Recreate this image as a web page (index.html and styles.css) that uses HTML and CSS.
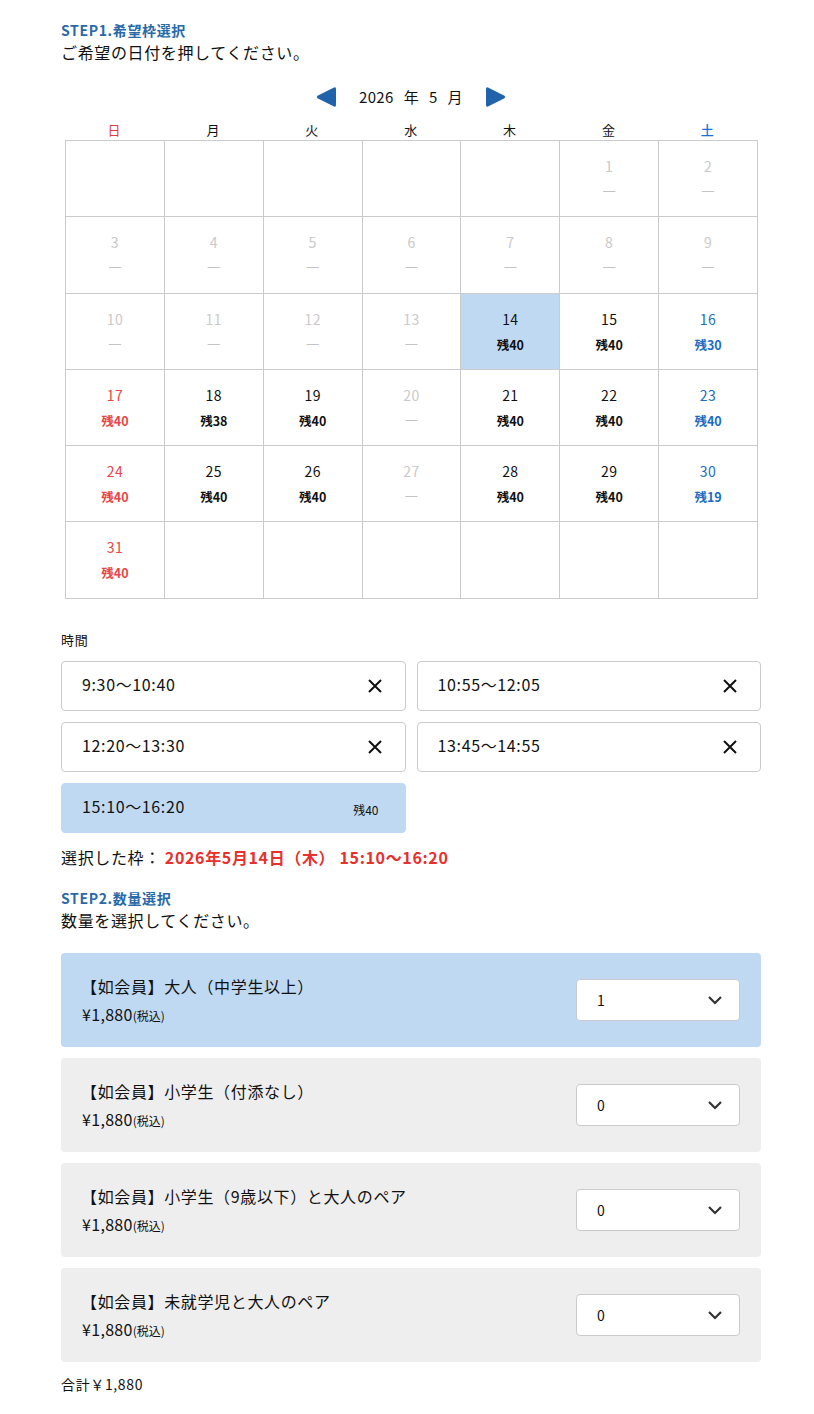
FILE: index.html
```html
<!DOCTYPE html>
<html lang="ja">
<head>
<meta charset="utf-8">
<title>予約</title>
<link rel="stylesheet" href="styles.css">
</head>
<body>
<main class="page">
  <section class="step">
    <h2 class="step-title">STEP1.希望枠選択</h2>
    <p class="step-desc">ご希望の日付を押してください。</p>

    <div class="cal-nav">
      <button class="nav-btn" aria-label="前の月">
        <svg width="22" height="24" viewBox="0 0 22 24"><path d="M19 2.5 Q21 1.5 21 4 V20 Q21 22.5 19 21.5 L2.5 13.3 Q1 12 2.5 10.7 Z" fill="#2163ab"/></svg>
      </button>
      <div class="cal-month"><span>2026</span><span>年</span><span>5</span><span>月</span></div>
      <button class="nav-btn" aria-label="次の月">
        <svg width="22" height="24" viewBox="0 0 22 24"><path d="M3 2.5 Q1 1.5 1 4 V20 Q1 22.5 3 21.5 L19.5 13.3 Q21 12 19.5 10.7 Z" fill="#2163ab"/></svg>
      </button>
    </div>

    <div class="cal-week">
      <span class="wd wd-sun">日</span><span class="wd">月</span><span class="wd">火</span><span class="wd">水</span><span class="wd">木</span><span class="wd">金</span><span class="wd wd-sat">土</span>
    </div>

    <div class="cal-grid">
      <div class="cell"></div><div class="cell"></div><div class="cell"></div><div class="cell"></div><div class="cell"></div>
      <div class="cell off"><span class="d">1</span><span class="r">—</span></div>
      <div class="cell off"><span class="d">2</span><span class="r">—</span></div>

      <div class="cell off"><span class="d">3</span><span class="r">—</span></div>
      <div class="cell off"><span class="d">4</span><span class="r">—</span></div>
      <div class="cell off"><span class="d">5</span><span class="r">—</span></div>
      <div class="cell off"><span class="d">6</span><span class="r">—</span></div>
      <div class="cell off"><span class="d">7</span><span class="r">—</span></div>
      <div class="cell off"><span class="d">8</span><span class="r">—</span></div>
      <div class="cell off"><span class="d">9</span><span class="r">—</span></div>

      <div class="cell off"><span class="d">10</span><span class="r">—</span></div>
      <div class="cell off"><span class="d">11</span><span class="r">—</span></div>
      <div class="cell off"><span class="d">12</span><span class="r">—</span></div>
      <div class="cell off"><span class="d">13</span><span class="r">—</span></div>
      <div class="cell selected"><span class="d">14</span><span class="r">残40</span></div>
      <div class="cell"><span class="d">15</span><span class="r">残40</span></div>
      <div class="cell sat"><span class="d">16</span><span class="r">残30</span></div>

      <div class="cell sun"><span class="d">17</span><span class="r">残40</span></div>
      <div class="cell"><span class="d">18</span><span class="r">残38</span></div>
      <div class="cell"><span class="d">19</span><span class="r">残40</span></div>
      <div class="cell off"><span class="d">20</span><span class="r">—</span></div>
      <div class="cell"><span class="d">21</span><span class="r">残40</span></div>
      <div class="cell"><span class="d">22</span><span class="r">残40</span></div>
      <div class="cell sat"><span class="d">23</span><span class="r">残40</span></div>

      <div class="cell sun"><span class="d">24</span><span class="r">残40</span></div>
      <div class="cell"><span class="d">25</span><span class="r">残40</span></div>
      <div class="cell"><span class="d">26</span><span class="r">残40</span></div>
      <div class="cell off"><span class="d">27</span><span class="r">—</span></div>
      <div class="cell"><span class="d">28</span><span class="r">残40</span></div>
      <div class="cell"><span class="d">29</span><span class="r">残40</span></div>
      <div class="cell sat"><span class="d">30</span><span class="r">残19</span></div>

      <div class="cell sun"><span class="d">31</span><span class="r">残40</span></div>
      <div class="cell"></div><div class="cell"></div><div class="cell"></div><div class="cell"></div><div class="cell"></div><div class="cell"></div>
    </div>

    <p class="time-label">時間</p>
    <div class="slots">
      <div class="slot"><span>9:30〜10:40</span><svg class="x" width="16" height="16" viewBox="0 0 16 16"><path d="M2 2 L14 14 M14 2 L2 14" stroke="#111" stroke-width="2" fill="none"/></svg></div>
      <div class="slot"><span>10:55〜12:05</span><svg class="x" width="16" height="16" viewBox="0 0 16 16"><path d="M2 2 L14 14 M14 2 L2 14" stroke="#111" stroke-width="2" fill="none"/></svg></div>
      <div class="slot"><span>12:20〜13:30</span><svg class="x" width="16" height="16" viewBox="0 0 16 16"><path d="M2 2 L14 14 M14 2 L2 14" stroke="#111" stroke-width="2" fill="none"/></svg></div>
      <div class="slot"><span>13:45〜14:55</span><svg class="x" width="16" height="16" viewBox="0 0 16 16"><path d="M2 2 L14 14 M14 2 L2 14" stroke="#111" stroke-width="2" fill="none"/></svg></div>
      <div class="slot active"><span>15:10〜16:20</span><span class="left">残40</span></div>
    </div>

    <p class="chosen">選択した枠：<strong>2026年5月14日（木） 15:10〜16:20</strong></p>
  </section>

  <section class="step step2">
    <h2 class="step-title">STEP2.数量選択</h2>
    <p class="step-desc">数量を選択してください。</p>

    <div class="tickets">
      <div class="ticket active">
        <div class="ticket-info">
          <p class="ticket-name">【如会員】大人（中学生以上）</p>
          <p class="ticket-price">¥1,880<small>(税込)</small></p>
        </div>
        <div class="qty"><span>1</span><svg width="16" height="10" viewBox="0 0 16 10"><path d="M2 2 L8 8 L14 2" stroke="#333" stroke-width="2.2" fill="none"/></svg></div>
      </div>
      <div class="ticket">
        <div class="ticket-info">
          <p class="ticket-name">【如会員】小学生（付添なし）</p>
          <p class="ticket-price">¥1,880<small>(税込)</small></p>
        </div>
        <div class="qty"><span>0</span><svg width="16" height="10" viewBox="0 0 16 10"><path d="M2 2 L8 8 L14 2" stroke="#333" stroke-width="2.2" fill="none"/></svg></div>
      </div>
      <div class="ticket">
        <div class="ticket-info">
          <p class="ticket-name">【如会員】小学生（9歳以下）と大人のペア</p>
          <p class="ticket-price">¥1,880<small>(税込)</small></p>
        </div>
        <div class="qty"><span>0</span><svg width="16" height="10" viewBox="0 0 16 10"><path d="M2 2 L8 8 L14 2" stroke="#333" stroke-width="2.2" fill="none"/></svg></div>
      </div>
      <div class="ticket">
        <div class="ticket-info">
          <p class="ticket-name">【如会員】未就学児と大人のペア</p>
          <p class="ticket-price">¥1,880<small>(税込)</small></p>
        </div>
        <div class="qty"><span>0</span><svg width="16" height="10" viewBox="0 0 16 10"><path d="M2 2 L8 8 L14 2" stroke="#333" stroke-width="2.2" fill="none"/></svg></div>
      </div>
    </div>

    <p class="total">合計￥1,880</p>
  </section>
</main>
</body>
</html>
```

FILE: styles.css
```css
* { box-sizing: border-box; }

body {
  margin: 0;
  background: #fff;
  color: #111;
  font-family: "Noto Sans CJK JP", "Noto Sans", sans-serif;
  letter-spacing: 0.04em;
}

p, h2 { margin: 0; }

.page {
  width: 700px;
  margin-left: 61px;
  padding-top: 20px;
  padding-bottom: 24px;
}

.step-title {
  font-size: 14px;
  line-height: 20px;
  font-weight: 700;
  color: #2a69a8;
}

.step-desc {
  font-size: 16px;
  line-height: 24px;
}

/* month navigation */
.cal-nav {
  margin-top: 18px;
  height: 30px;
  display: flex;
  align-items: center;
  justify-content: center;
  gap: 22px;
}

.nav-btn {
  border: 0;
  padding: 0;
  background: none;
  display: flex;
  cursor: pointer;
}

.cal-month {
  display: flex;
  gap: 10px;
  font-size: 15px;
  line-height: 20px;
  letter-spacing: 0.02em;
}

.cal-week {
  margin: 8px 4px 0;
  display: grid;
  grid-template-columns: repeat(7, 1fr);
  font-size: 13px;
  line-height: 20px;
  text-align: center;
}
.cal-week .wd-sun { color: #e23b3b; }
.cal-week .wd-sat { color: #1872d6; font-weight: 500; }

/* calendar body */
.cal-grid {
  margin: 0 3px 0 4px;
  display: grid;
  grid-template-columns: repeat(7, 1fr);
  border-top: 1px solid #cbcbcb;
  border-left: 1px solid #cbcbcb;
}

.cell {
  height: 76.3px;
  border-right: 1px solid #cbcbcb;
  border-bottom: 1px solid #cbcbcb;
  display: flex;
  flex-direction: column;
  align-items: center;
  padding-top: 15px;
  color: #111;
}

.cell .d {
  font-size: 14px;
  line-height: 20px;
  letter-spacing: 0.03em;
}

.cell .r {
  margin-top: 7px;
  font-size: 12.5px;
  line-height: 18px;
  font-weight: 700;
  letter-spacing: 0;
}

.cell.off { color: #c9c9c9; }
.cell.off .r { font-weight: 400; color: #c4c4c4; font-size: 15px; margin-top: 5px; }
.cell.sun { color: #e84545; }
.cell.sat { color: #1c6cc4; }
.cell.selected { background: #bfd9f2; }

/* time slots */
.time-label {
  margin-top: 31px;
  font-size: 13px;
  line-height: 20px;
}

.slots {
  margin-top: 11px;
  display: grid;
  grid-template-columns: 1fr 1fr;
  gap: 11px;
}

.slot {
  height: 50px;
  border: 1px solid #cbcbcb;
  border-radius: 4px;
  display: flex;
  align-items: center;
  justify-content: space-between;
  padding: 0 22px 0 20px;
  font-size: 16px;
}
.slot span:first-child { margin-top: -3px; }

.slot.active {
  background: #bfd9f2;
  border-color: #bfd9f2;
  padding-right: 26px;
}

.slot .left {
  font-size: 12px;
  margin-top: 4px;
  letter-spacing: 0;
}

.chosen {
  margin-top: 12px;
  font-size: 16px;
  line-height: 24px;
}
.chosen strong {
  color: #e8302c;
  font-weight: 700;
  margin-left: 4px;
}

/* quantity */
.step2 { margin-top: 19px; }

.tickets {
  margin-top: 21px;
  display: flex;
  flex-direction: column;
  gap: 11px;
}

.ticket {
  height: 94px;
  border-radius: 4px;
  background: #eeeeee;
  display: flex;
  align-items: center;
  justify-content: space-between;
  padding: 0 21px;
}
.ticket.active { background: #bfd9f2; }

.ticket-info { margin-top: 2px; }

.ticket-name {
  font-size: 16px;
  line-height: 24px;
  margin-left: -1px;
}

.ticket-price {
  margin-top: 4px;
  font-size: 16px;
  line-height: 24px;
  letter-spacing: 0.02em;
}
.ticket-price small {
  font-size: 12px;
  letter-spacing: 0;
}

.qty {
  width: 164px;
  height: 42px;
  background: #fff;
  border: 1px solid #cbcbcb;
  border-radius: 4px;
  display: flex;
  align-items: center;
  justify-content: space-between;
  padding: 0 16px 0 20px;
  font-size: 14px;
}

.total {
  margin-top: 12px;
  font-size: 14px;
  line-height: 20px;
}
```
